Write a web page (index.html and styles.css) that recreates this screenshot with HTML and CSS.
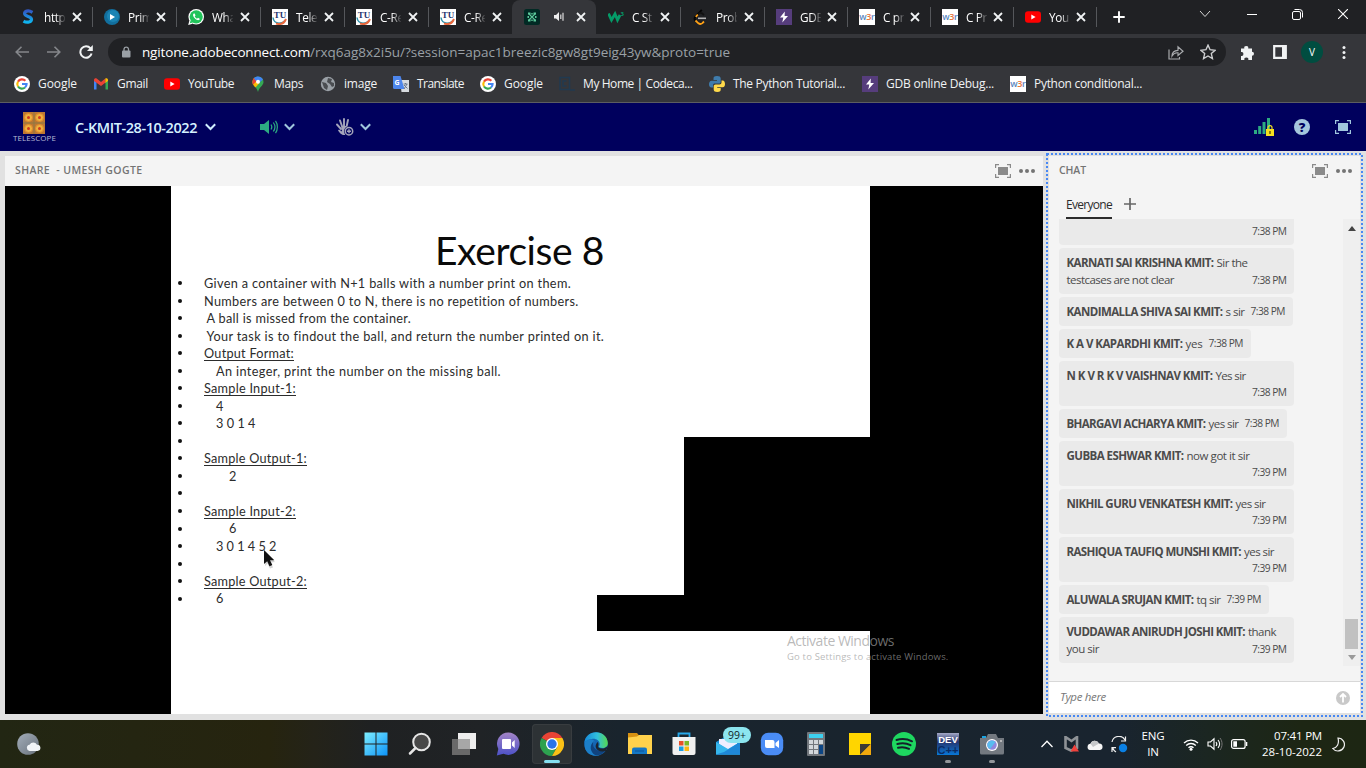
FILE: index.html
```html
<!DOCTYPE html>
<html lang="en">
<head>
<meta charset="utf-8">
<title>C-KMIT-28-10-2022</title>
<link rel="stylesheet" href="styles.css">
</head>
<body>
<svg class="defs" width="0" height="0">
  <symbol id="x" viewBox="0 0 10 10"><path d="M1 1l8 8M9 1l-8 8" fill="none" stroke="#f1f3f4" stroke-width="1.8"/></symbol>
  <symbol id="tu" viewBox="0 0 16 16"><path d="M0 0h16v16H0z" fill="#fff"/><path d="M1 8.500c.5 4 3 5.500 6 5.700c3 0 5-1 6-2.700" fill="none" stroke="#2a8fa8" stroke-width="1.500"/><path d="M4 14.500c4 1.300 8 0 10-4.500" fill="none" stroke="#e8673c" stroke-width="2"/><text x="8" y="8.500" text-anchor="middle" font-family="Liberation Serif" font-weight="700" font-size="9" fill="#27356f">TU</text></symbol>
  <symbol id="w3r" viewBox="0 0 16 16"><path d="M0 0h16v16H0z" fill="#fff"/><text x=".3" y="11" font-family="Open Sans" font-size="9" font-weight="600" letter-spacing="-.4" fill="#5b86c0">w<tspan fill="#e8743b">3</tspan>r</text></symbol>
  <symbol id="gdb" viewBox="0 0 16 16"><path d="M0 0h16v16H0z" fill="#563d7c"/><path d="M8.800 2.500L4 8.600h3.300L6.300 13.500 12 6.900H8.600z" fill="#fff"/></symbol>
  <symbol id="yt" viewBox="0 0 16 16"><rect y="2.300" width="16" height="11.500" rx="3" fill="#f00"/><path d="M6.300 5.500v5L10.600 8z" fill="#fff"/></symbol>
  <symbol id="google" viewBox="0 0 16 16"><circle cx="8" cy="8" r="8" fill="#fff"/><g fill="none" stroke-width="2.100"><path d="M11.400 4.800A4.700 4.700 0 0 0 4 5.600" stroke="#ea4335"/><path d="M4 5.600a4.700 4.700 0 0 0 0 4.900" stroke="#fbbc05"/><path d="M4 10.500a4.700 4.700 0 0 0 7 1" stroke="#34a853"/><path d="M11 11.500c1.200-1 1.600-2.100 1.600-3.500H8" stroke="#4285f4"/></g></symbol>
  <symbol id="chev" viewBox="0 0 11 8"><path d="M.8 1.300l4.700 4.700 4.700-4.700" fill="none" stroke="currentColor" stroke-width="2"/></symbol>
  <symbol id="full" viewBox="0 0 16 14"><path d="M4 .6H.6V4M12 .6h3.400V4M4 13.400H.6V10M12 13.400h3.400V10" fill="none" stroke="currentColor" stroke-width="1.200"/><path d="M3 3h10v8H3z" fill="currentColor"/></symbol>
  <symbol id="dots" viewBox="0 0 16 4"><g fill="currentColor"><circle cx="2" cy="2" r="2"/><circle cx="8" cy="2" r="2"/><circle cx="14" cy="2" r="2"/></g></symbol>
</svg>

<header class="tabs">
  <div class="tab"><svg class="fav" viewBox="0 0 16 16"><defs><linearGradient id="sg" x2="0" y2="1"><stop stop-color="#3159c5"/><stop offset="1" stop-color="#0fb4ef"/></linearGradient></defs><path d="M12.500 3.300C8 .8 4.600 2.200 4.600 4.600c0 3.400 6.900 2.300 6.900 5.600 0 2.800-4.300 4-8 1.900" fill="none" stroke="url(#sg)" stroke-width="3.200"/></svg><span class="title">http</span><svg class="close"><use href="#x"/></svg></div>
  <div class="tab"><svg class="fav" viewBox="0 0 16 16"><circle cx="8" cy="8" r="8" fill="#126f9e"/><circle cx="9" cy="7" r="6" fill="#1b84b4"/><path d="M6 5v6l5-3z" fill="#fff"/></svg><span class="title">Prim</span><svg class="close"><use href="#x"/></svg></div>
  <div class="tab"><svg class="fav" viewBox="0 0 16 16"><circle cx="8.200" cy="7.800" r="7.800" fill="#fff"/><path d="M.2 16l1.200-4.500 3.300 3.300z" fill="#fff"/><circle cx="8.200" cy="7.800" r="6.600" fill="#21c45a"/><path d="M1.800 14.300l1-3.300 2.200 2.500z" fill="#21c45a"/><path d="M5.700 4.500c-1.300 1-.7 3.500 1.500 5.300 2.200 1.900 4 1.800 4.800.3l-2-1.300-1 1c-1-.4-1.800-1.200-2.300-2.200l.8-1-.8-2z" fill="#fff"/></svg><span class="title">Wha</span><svg class="close"><use href="#x"/></svg></div>
  <div class="tab"><svg class="fav"><use href="#tu"/></svg><span class="title">Tele</span><svg class="close"><use href="#x"/></svg></div>
  <div class="tab"><svg class="fav"><use href="#tu"/></svg><span class="title">C-R<i>e</i></span><svg class="close"><use href="#x"/></svg></div>
  <div class="tab last"><svg class="fav"><use href="#tu"/></svg><span class="title">C-R<i>e</i></span><svg class="close"><use href="#x"/></svg></div>
  <div class="tab active"><svg class="fav" viewBox="0 0 16 16"><rect width="16" height="16" rx="2.500" fill="#012a24"/><path d="M4.500 4.500l7 7M11.500 4.500l-7 7" fill="none" stroke="#5cc99b" stroke-width="1.100"/><g fill="#5cc99b"><path d="M4 3.500h2.500v2H4zM9.500 3.500H12v2H9.500zM4 10.500h2.500v2H4zM9.500 10.500H12v2H9.500zM3.500 7h1.500v2H3.500zM11 7h1.500v2H11zM7.300 4h1.400v1.500H7.300zM7.300 10.500h1.400V12H7.300z"/></g></svg><svg class="sound" viewBox="0 0 11 10"><path d="M0 3h2l3-3v9L2 6.500H0z" fill="#eee"/><path d="M6.800 2.500v4.500M9 .8v8" stroke="#ddd" stroke-width="1.200"/></svg><svg class="close"><use href="#x"/></svg></div>
  <div class="tab"><svg class="fav" viewBox="0 0 16 16"><path d="M.5 4.500l3 6.500L7 5l2.500 6 2.500-5" fill="none" stroke="#049b68" stroke-width="2.800"/><text x="12.500" y="6.500" font-family="Open Sans" font-size="6" font-weight="700" fill="#049b68">3</text></svg><span class="title">C St</span><svg class="close"><use href="#x"/></svg></div>
  <div class="tab"><svg class="fav" viewBox="0 0 16 16"><path d="M9.800.8L3.500 7.500C2.300 9 2.300 10.500 3.500 11.800" fill="none" stroke="#050505" stroke-width="1.900"/><path d="M12 6L10 4.300C8.800 3.500 7.500 3.700 6.500 4.800" fill="none" stroke="#111" stroke-width="1.700"/><path d="M3.500 11.500L6.400 14.300c1.300.9 2.700.9 4-.2l1.600-1.600M5.800 5.500L3.800 7.800" fill="none" stroke="#ffa116" stroke-width="1.800"/><path d="M6 9.300h8" stroke="#b3b3b3" stroke-width="1.600"/></svg><span class="title">Prob</span><svg class="close"><use href="#x"/></svg></div>
  <div class="tab n"><svg class="fav"><use href="#gdb"/></svg><span class="title">GD<i>B</i></span><svg class="close"><use href="#x"/></svg></div>
  <div class="tab n"><svg class="fav"><use href="#w3r"/></svg><span class="title">C pr</span><svg class="close"><use href="#x"/></svg></div>
  <div class="tab n"><svg class="fav"><use href="#w3r"/></svg><span class="title">C Pr</span><svg class="close"><use href="#x"/></svg></div>
  <div class="tab n"><svg class="fav"><use href="#yt"/></svg><span class="title">You</span><svg class="close"><use href="#x"/></svg></div>
  <svg class="plus" viewBox="0 0 12 12"><path d="M6 .3v11.400M.3 6h11.400" stroke="#fff" stroke-width="1.900"/></svg>
  <div class="winctl">
    <svg width="12" height="8" viewBox="0 0 12 8"><path d="M1 1l5 5.500L11 1" fill="none" stroke="#d5d5d5"/></svg>
    <svg width="10" height="8" viewBox="0 0 10 8"><path d="M0 4.500h10" stroke="#fff"/></svg>
    <svg width="11" height="11" viewBox="0 0 11 11"><rect x=".5" y="2.500" width="8" height="8" rx="1.500" fill="none" stroke="#fff"/><path d="M2.500.5h5a3 3 0 0 1 3 3v5" fill="none" stroke="#fff"/></svg>
    <svg width="10" height="10" viewBox="0 0 10 10"><path d="M0 0l10 10M10 0L0 10" stroke="#fff" stroke-width="1.100"/></svg>
  </div>
</header>

<div class="toolbar">
  <svg class="nav" viewBox="0 0 14 12"><path d="M14 6H1M6.500.7L1.200 6l5.300 5.300" fill="none" stroke="#85878b" stroke-width="1.600"/></svg>
  <svg class="nav" viewBox="0 0 14 12"><path d="M0 6h13M7.500.7L12.800 6l-5.300 5.300" fill="none" stroke="#85878b" stroke-width="1.600"/></svg>
  <svg class="reload" viewBox="0 0 14 14"><path d="M11.500 3.400A5.700 5.700 0 1 0 12.600 8.500" fill="none" stroke="#f1f3f4" stroke-width="2"/><path d="M13.800 0v6H8z" fill="#f1f3f4"/></svg>
  <div class="omni">
    <svg class="lock" viewBox="0 0 10 13"><rect x="1" y="4.500" width="8.500" height="7" rx="1" fill="#9aa0a6"/><path d="M3 5V3a2.300 2.300 0 0 1 4.500 0v2" fill="none" stroke="#9aa0a6" stroke-width="1.300"/></svg>
    <span class="host" data-fit="168">ngitone.adobeconnect.com</span><span class="path" data-fit="420">/rxq6ag8x2i5u/?session=apac1breezic8gw8gt9eig43yw&amp;proto=true</span>
    <svg class="share" viewBox="0 0 16 15"><path d="M1 4.500v9.500h10.500v-2M4 11c0-4 2-5.500 6-5.700V1.800L15 6.300l-5 4.200V7.800C7.500 7.500 5.500 8.500 4 11z" fill="none" stroke="#a9abae" stroke-width="1.200"/></svg>
    <svg class="star" viewBox="0 0 14 14"><path d="M7 1l1.800 4 4.400.5-3.300 2.900 1 4.300L7 10.500l-3.900 2.200 1-4.300L.8 5.500 5.200 5z" fill="none" stroke="#cfd0d2" stroke-width="1.200"/></svg>
  </div>
  <svg class="puz" viewBox="0 0 15 15"><path d="M1 3.500h3.300a2 2 0 1 1 3.900 0H12v3.300a2 2 0 1 1 0 4V15H8.300a2 2 0 1 0-3.900 0H1v-4a2 2 0 1 0 0-3.900z" fill="#f1f3f4"/></svg>
  <svg class="side" viewBox="0 0 14 14"><path d="M1.200 1.200h11.600v11.600H1.200z" fill="none" stroke="#f1f3f4" stroke-width="2.200"/><path d="M9 1h4v12H9z" fill="#f1f3f4"/></svg>
  <span class="avatar">V</span>
  <svg class="kebab" viewBox="0 0 4 13"><g fill="#f1f3f4"><circle cx="2" cy="1.600" r="1.500"/><circle cx="2" cy="6.500" r="1.500"/><circle cx="2" cy="11.400" r="1.500"/></g></svg>
</div>

<nav class="marks">
  <div class="bm b1"><svg class="fav"><use href="#google"/></svg><span data-fit="39">Google</span></div>
  <div class="bm b2"><svg class="fav" viewBox="0 0 16 16"><path d="M1 13.500V4.500l2.500 1.800v7.200z" fill="#4285f4"/><path d="M15 13.500V4.500l-2.500 1.800v7.200z" fill="#34a853"/><path d="M1 3.800c0-1.600 1.800-2 2.700-1.300L8 6l4.300-3.500v4.300L8 10 3.500 6.800 1 5z" fill="#ea4335"/><path d="M12.300 2.500c1-.8 2.700-.2 2.700 1.300V5l-2.700 2z" fill="#fbbc04"/></svg><span data-fit="31">Gmail</span></div>
  <div class="bm b3"><svg class="fav"><use href="#yt"/></svg><span data-fit="46">YouTube</span></div>
  <div class="bm b4"><svg class="fav" viewBox="0 0 16 16"><path d="M2.500 6a5.500 5.500 0 0 1 11 0c0 3.500-4.300 5-5.500 10C6.800 11.500 2.500 9.500 2.500 6z" fill="#34a853"/><path d="M2.500 6A5.500 5.500 0 0 1 4 2.300L9.500 7 5.500 11.500C3.800 9.800 2.500 8.200 2.500 6z" fill="#fbbc04"/><path d="M4 2l3 2.700-4.100 4C2.200 6.300 2.500 3.500 4 2z" fill="#ea4335"/><path d="M4 2c3-2.700 7.200-1.700 9 1.500L9 7 5 4z" fill="#4285f4"/><circle cx="8" cy="5.800" r="2" fill="#fff"/></svg><span data-fit="29">Maps</span></div>
  <div class="bm b5"><svg class="fav" viewBox="0 0 16 16"><circle cx="8" cy="8" r="7.200" fill="#9aa0a6"/><path d="M2 6l4 1 2 3-1 4-3-2zM8 2l4 1-1 3 3 1v3l-2 1-2-3-3-2z" fill="#4a4d51"/></svg><span data-fit="33">image</span></div>
  <div class="bm b6"><svg class="fav" viewBox="0 0 16 16"><path d="M7 4h9v12H8.500z" fill="#d7dbe0"/><path d="M0 0h7.500l4 13H1.500Q0 13 0 11.500z" fill="#4d86ec"/><text x="1.500" y="8.500" font-family="Open Sans" font-size="7" font-weight="700" fill="#fff">G</text><path d="M10.500 8h4M12.500 7v1M11 13l3-5M11 9l3.500 3.500" stroke="#68778c" fill="none"/></svg><span data-fit="47">Translate</span></div>
  <div class="bm b7"><svg class="fav"><use href="#google"/></svg><span data-fit="39">Google</span></div>
  <div class="bm b8"><svg class="fav" viewBox="0 0 16 16"><path d="M10.500 13.500H1v-12h9.500z" fill="none" stroke="#213a50" stroke-width="1.500"/><path d="M7.500 5H4v5h3.500M11 14h5" fill="none" stroke="#213a50" stroke-width="1.500"/></svg><span data-fit="109.500">My Home | Codeca...</span></div>
  <div class="bm b9"><svg class="fav" viewBox="0 0 16 16"><path d="M8 0C5 0 4.500 1 4.500 2.500V4H8v.7H2.500C.8 4.700 0 6.500 0 8.300S.8 11.500 2.500 11.500H4V9.500c0-1.400.8-2 2-2h4c1 0 1.700-.8 1.700-1.800V2.500C11.700.8 10.500 0 8 0z" fill="#3f7cac"/><path d="M8.200 16c3 0 3.500-1 3.500-2.500V12H8.200v-.7h5.500c1.700 0 2.300-1.500 2.300-3.300s-.8-3.500-2.300-3.500h-1.200v2c0 1.300-1 2-2 2h-4c-1 0-1.800.8-1.800 1.800v3.200C4.700 15.200 6 16 8.200 16z" fill="#ffda4b"/></svg><span data-fit="112">The Python Tutorial...</span></div>
  <div class="bm b10"><svg class="fav"><use href="#gdb"/></svg><span data-fit="108">GDB online Debug...</span></div>
  <div class="bm b11"><svg class="fav"><use href="#w3r"/></svg><span data-fit="108">Python conditional...</span></div>
</nav>

<div class="apphead">
  <div class="brand"><svg width="22" height="22" viewBox="0 0 22 22"><path d="M0 0h22v22H0z" fill="#bd7832"/><g fill="#efb23d" stroke="#e08a30" stroke-width="1"><circle cx="5.500" cy="5.500" r="4"/><circle cx="16.500" cy="5.500" r="4"/><circle cx="5.500" cy="16.500" r="4"/><circle cx="16.500" cy="16.500" r="4"/></g><g fill="#d0391e"><circle cx="5.500" cy="5.500" r="1.500"/><circle cx="16.500" cy="5.500" r="1.500"/><circle cx="5.500" cy="16.500" r="1.500"/><circle cx="16.500" cy="16.500" r="1.500"/></g><path d="M11 0v22M0 11h22" stroke="#8d7844"/></svg><span data-fit="43">TELESCOPE</span></div>
  <span class="room" data-fit="122">C-KMIT-28-10-2022</span>
  <svg class="chev c1"><use href="#chev"/></svg>
  <svg class="spk" viewBox="0 0 18 14"><path d="M0 4h4l5-4v14l-5-4H0z" fill="#2dab82"/><path d="M11 4.500c1 1.500 1 3.500 0 5M13.300 2.500c2 2.700 2 6.300 0 9M15.500.8c2.500 3.500 2.500 8.900 0 12.400" fill="none" stroke="#2dab82" stroke-width="1.200"/></svg>
  <svg class="chev c2"><use href="#chev"/></svg>
  <svg class="hand" viewBox="0 0 18 18"><g fill="none" stroke="#a4a5bb" stroke-linecap="round" stroke-width="1.900"><path d="M1 6.500l4 4.500M4 2.500l2.500 7M8 1v8M12 2l-1.500 7"/></g><path d="M5.500 8H12l-1 3.500L9 17H8c-3 0-4.500-2.500-6-4.500l1-1 3 2z" fill="#a4a5bb"/><circle cx="13" cy="13.200" r="5" fill="#00005d"/><circle cx="13" cy="13.200" r="3.700" fill="none" stroke="#a4a5bb" stroke-width="1.500"/><path d="M13 11.200v4M11 13.200h4" stroke="#a4a5bb" stroke-width="1.400"/></svg>
  <svg class="chev c3"><use href="#chev"/></svg>
  <svg class="bars" viewBox="0 0 20 19"><path d="M0 12h3v4H0zM4.200 8h3v8h-3zM8.500 4h3v12h-3zM13 0h3v16h-3z" fill="#2dab82"/><path d="M14 11V9.600a2 2 0 0 1 4 0V11" fill="none" stroke="#f2df20" stroke-width="1.200"/><path d="M12 11h8v7h-8z" fill="#f7e11d"/><path d="M16 13v3" stroke="#574e10" stroke-width="1.400"/></svg>
  <span class="help">?</span>
  <svg class="fs"><use href="#full"/></svg>
</div>

<main class="stage">
  <section class="pod share-pod">
    <div class="podhead"><span data-fit="127.5">SHARE &nbsp;- UMESH GOGTE</span><svg class="pfull"><use href="#full"/></svg><svg class="pdots"><use href="#dots"/></svg></div>
    <div class="screen">
      <div class="slide">
        <h1><span data-fit="169">Exercise 8</span></h1>
        <ul>
          <li><span data-fit="367">Given a container with N+1 balls with a number print on them.</span></li>
          <li><span data-fit="375">Numbers are between 0 to N, there is no repetition of numbers.</span></li>
          <li class="i1"><span data-fit="204.500">A ball is missed from the container.</span></li>
          <li class="i1"><span data-fit="397.500">Your task is to findout the ball, and return the number printed on it.</span></li>
          <li><u data-fit="90">Output Format:</u></li>
          <li class="i2"><span data-fit="285">An integer, print the number on the missing ball.</span></li>
          <li><u data-fit="92">Sample Input-1:</u></li>
          <li class="i2">4</li>
          <li class="i2"><span data-fit="39.500">3 0 1 4</span></li>
          <li></li>
          <li><u data-fit="103">Sample Output-1:</u></li>
          <li class="i3">2</li>
          <li></li>
          <li><u data-fit="92">Sample Input-2:</u></li>
          <li class="i3">6</li>
          <li class="i2"><span data-fit="60.500">3 0 1 4 5 2</span></li>
          <li></li>
          <li><u data-fit="103">Sample Output-2:</u></li>
          <li class="i2">6</li>
        </ul>
        <div class="block upper"></div>
        <div class="block lower"></div>
        <svg class="cursor" viewBox="0 0 14 20"><path d="M3 4l9 9-4 .5 2 5-3 1-2.500-5L2 17z" fill="#aaa" opacity=".5"/><path d="M1 1v14l3.200-2.800 2.300 5 2.800-1.200-2.300-4.800h4.300z" fill="#111"/></svg>
      </div>
      <div class="watermark"><span class="w1" data-fit="107">Activate Windows</span><span class="w2" data-fit="161.500">Go to Settings to activate Windows.</span></div>
    </div>
  </section>

  <section class="chat">
    <svg class="dotted" width="317" height="564"><rect x="1" y="1" width="315" height="562" fill="none" stroke="#4788f4" stroke-width="2" stroke-dasharray="2 2"/></svg>
    <div class="podhead"><span data-fit="27">CHAT</span><svg class="pfull"><use href="#full"/></svg><svg class="pdots"><use href="#dots"/></svg></div>
    <div class="chattabs"><span class="ev"><span data-fit="46">Everyone</span></span><svg width="12" height="12" viewBox="0 0 12 12"><path d="M6 0v12M0 6h12" stroke="#666" stroke-width="1.700"/></svg></div>
    <div class="log">
      <div class="msgs">
        <div class="msg cut"><time data-fit="34.500">7:38 PM</time></div>
        <div class="msg two t46"><p><b data-fit="147">KARNATI SAI KRISHNA KMIT:</b><span class="s" data-fit="31">Sir the</span><br><span data-fit="107.500">testcases are not clear</span></p><time data-fit="34.500">7:38 PM</time></div>
        <div class="msg one"><b data-fit="156">KANDIMALLA SHIVA SAI KMIT:</b><span class="s" data-fit="19">s sir</span><time data-fit="34.500">7:38 PM</time></div>
        <div class="msg one"><b data-fit="116">K A V KAPARDHI KMIT:</b><span class="s" data-fit="17">yes</span><time data-fit="34.500">7:38 PM</time></div>
        <div class="msg two"><p><b data-fit="146">N K V R K V VAISHNAV KMIT:</b><span class="s" data-fit="30">Yes sir</span></p><time data-fit="34.500">7:38 PM</time></div>
        <div class="msg one"><b data-fit="139">BHARGAVI ACHARYA KMIT:</b><span class="s" data-fit="30">yes sir</span><time data-fit="34.500">7:38 PM</time></div>
        <div class="msg two"><p><b data-fit="117">GUBBA ESHWAR KMIT:</b><span class="s" data-fit="63">now got it sir</span></p><time data-fit="34.500">7:39 PM</time></div>
        <div class="msg two"><p><b data-fit="166">NIKHIL GURU VENKATESH KMIT:</b><span class="s" data-fit="30">yes sir</span></p><time data-fit="34.500">7:39 PM</time></div>
        <div class="msg two"><p><b data-fit="174.5">RASHIQUA TAUFIQ MUNSHI KMIT:</b><span class="s" data-fit="30">yes sir</span></p><time data-fit="34.500">7:39 PM</time></div>
        <div class="msg one"><b data-fit="127">ALUWALA SRUJAN KMIT:</b><span class="s" data-fit="24">tq sir</span><time data-fit="34.500">7:39 PM</time></div>
        <div class="msg two t46"><p><b data-fit="178.5">VUDDAWAR ANIRUDH JOSHI KMIT:</b><span class="s" data-fit="28">thank</span><br><span data-fit="32.500">you sir</span></p><time data-fit="34.500">7:39 PM</time></div>
      </div>
      <div class="scroll"><i class="up"></i><i class="thumb"></i><i class="down"></i></div>
    </div>
    <div class="type"><em data-fit="46">Type here</em><svg width="14" height="14" viewBox="0 0 14 14"><circle cx="7" cy="7" r="7" fill="#c9c9c9"/><path d="M7 11.500V3.500M4 6l3-3 3 3" fill="none" stroke="#fff" stroke-width="1.800"/></svg></div>
  </section>
</main>

<footer class="task">
  <svg class="wx" viewBox="0 0 24 23"><defs><linearGradient id="mg" x2="1" y2="1"><stop stop-color="#a3adb9"/><stop offset="1" stop-color="#69727c"/></linearGradient></defs><circle cx="11" cy="11" r="10.800" fill="url(#mg)"/><path d="M12.500 18a3.200 3.200 0 0 1 0-6.300 4.300 4.300 0 0 1 7.500 0 3 3 0 0 1 .5 6.300z" fill="#f1f4f7"/></svg>
  <div class="apps">
    <div class="app"><svg width="24" height="24" viewBox="0 0 24 24"><defs><linearGradient id="wg" gradientUnits="userSpaceOnUse" x1="0" y1="0" x2="24" y2="24"><stop stop-color="#80f0ff"/><stop offset="1" stop-color="#0a91f8"/></linearGradient></defs><path d="M.5.500h11v11H.5zM12.500.500h11v11h-11zM.5 12.500h11v11H.5zM12.500 12.500h11v11h-11z" fill="url(#wg)"/></svg></div>
    <div class="app"><svg width="24" height="24" viewBox="0 0 24 24"><circle cx="13.500" cy="10" r="8.300" fill="#484848" stroke="#e6e6e6" stroke-width="2"/><path d="M7.500 16l-5.500 5.500" stroke="#e6e6e6" stroke-width="2.500" stroke-linecap="round"/></svg></div>
    <div class="app"><svg width="24" height="24" viewBox="0 0 24 24"><path d="M6 1h18v16H6z" fill="#eee"/><path d="M0 7h18v16H0z" fill="#696969"/><path d="M6 7h12v10H6z" fill="#a7a7a7"/></svg></div>
    <div class="app"><svg width="24" height="24" viewBox="0 0 24 24"><defs><linearGradient id="tg" x2="0" y2="1"><stop stop-color="#a384c6"/><stop offset="1" stop-color="#4c51c8"/></linearGradient></defs><path d="M12.500.500a11.200 11.200 0 1 1-5 21.300L.8 23.500l1.500-6.500A11.200 11.200 0 0 1 12.500.500z" fill="url(#tg)"/><rect x="6" y="7" width="9" height="10" rx="1" fill="#fff"/><path d="M16 10.500l2.700-2.500v8L16 13.500z" fill="#fff"/></svg></div>
    <div class="app on"><svg width="24" height="24" viewBox="0 0 24 24"><path d="M12 12L1.600 6A12 12 0 0 1 22.400 6z" fill="#e84335"/><path d="M12 12L1.600 6A12 12 0 0 0 12 24l5-9z" fill="#2da14f"/><path d="M12 6h10.400A12 12 0 0 1 12 24l5.200-9z" fill="#fbc116"/><circle cx="12" cy="12" r="6" fill="#fff"/><circle cx="12" cy="12" r="4.700" fill="#2a74e8"/></svg></div>
    <div class="app"><svg width="24" height="24" viewBox="0 0 24 24"><defs><linearGradient id="eg"><stop stop-color="#1688d8"/><stop offset=".55" stop-color="#31bfdc"/><stop offset="1" stop-color="#56d94e"/></linearGradient></defs><circle cx="12" cy="12" r="11.800" fill="#1566b3"/><path d="M.4 11C1.500-3.500 23-3 23.800 11c0 5-5 6-9 4 3-5-2-9-7-8C4 7.500 1.500 9 .4 11z" fill="url(#eg)"/><path d="M1 10c4-4 9-3 9.500 0C6 14 9 20 16 23 6 26-1 19 1 10z" fill="#1c7fc9"/><path d="M10 9c-3 5 1 11 11 10-3 4-8 5-10 4-5-3-6-10-1-14z" fill="#10437f"/><path d="M13.500 10c2 2 0 4 1 5.500 3 2 7 1 9.300-1.500L22 19c-9 2-13-4-8.500-9z" fill="#1b2530"/></svg></div>
    <div class="app"><svg width="24" height="22" viewBox="0 0 24 22"><path d="M0 0h9l2 2.500H24V7H0z" fill="#d69112"/><path d="M0 4.500L9 3.500l2-1.500h13v19H0z" fill="#ffd24c"/><path d="M4 21v-4.500Q4 14.500 6 14.500h11q2 0 2 2V21z" fill="#1477c4"/><path d="M7 18h9" stroke="#0c5498"/></svg></div>
    <div class="app"><svg width="24" height="24" viewBox="0 0 24 24"><path d="M6.500 6V1.500h11V6" fill="none" stroke="#26a8ea" stroke-width="1.800"/><path d="M.5 5h23v16q0 2-2 2h-19q-2 0-2-2z" fill="#f0f0f0"/><path d="M7 9h4.500v4.500H7z" fill="#e8502a"/><path d="M12.500 9H17v4.500h-4.500z" fill="#7cb928"/><path d="M7 14.500h4.500V19H7z" fill="#1a9fe5"/><path d="M12.500 14.500H17V19h-4.500z" fill="#fcb714"/></svg></div>
    <div class="app"><svg width="24" height="24" viewBox="0 0 24 24"><path d="M0 10L12 3l12 7v12.500H0z" fill="#148ad3"/><path d="M3 7h18v5l-9 6-9-6z" fill="#eef"/><path d="M0 10l12 7 12-7v12.500H0z" fill="#36b6ed"/><path d="M24 10L8 20l-8 2.500h24z" fill="#1f88d8"/></svg><span class="badge">99+</span></div>
    <div class="app"><svg width="24" height="24" viewBox="0 0 24 24"><rect x=".8" y=".8" width="22.400" height="22.400" rx="7.500" fill="#4a8cf5"/><path d="M5 8h7.500q2 0 2 2v6H7q-2 0-2-2zM15.500 11L19 8v8l-3.500-2.500z" fill="#fff"/></svg></div>
    <div class="app"><svg width="18" height="24" viewBox="0 0 18 24"><rect width="18" height="24" rx="1" fill="#72777d"/><path d="M2 2h14v4H2z" fill="#3dd0ef"/><path d="M2 8h4v4H2zM7 8h4v4H7zM12 8h4v4h-4zM2 13h4v4H2zM7 13h4v4H7zM2 18h4v4H2zM7 18h4v4H7z" fill="#d2d7db"/><path d="M12 13h4v9h-4z" fill="#0d4685"/></svg></div>
    <div class="app"><svg width="22" height="22" viewBox="0 0 22 22"><path d="M0 0h22v22H0z" fill="#ffd500"/><path d="M11 22V11h11z" fill="#3c3934"/><path d="M11 22L22 11v11z" fill="#f1a90d"/></svg></div>
    <div class="app"><svg width="24" height="24" viewBox="0 0 24 24"><circle cx="12" cy="12" r="12" fill="#1ed760"/><path d="M4.500 8c5-1.500 11-1 15.500 1.300M5.300 12c4.500-1.300 9.500-.8 13.200 1.200M6 15.700c4-1 7.500-.6 11 1.200" fill="none" stroke="#14202a" stroke-width="2" stroke-linecap="round"/></svg></div>
    <div class="app run"><svg width="22" height="22" viewBox="0 0 22 22"><defs><linearGradient id="dg" x2="0" y2="1"><stop stop-color="#a4a9c6"/><stop offset=".4" stop-color="#25356f"/><stop offset="1" stop-color="#0878d8"/></linearGradient></defs><path d="M0 0h22v22H0z" fill="url(#dg)"/><text x="11" y="10" text-anchor="middle" font-family="Liberation Sans" font-size="9.500" font-weight="700" fill="#fff">DEV</text><text x="11" y="20.500" text-anchor="middle" font-family="Liberation Sans" font-size="11" font-weight="700" fill="#092b65">C++</text></svg></div>
    <div class="app run"><svg width="24" height="22" viewBox="0 0 24 22"><path d="M2 3h4v3H2z" fill="#1aa5e3"/><path d="M0 5h6l2-4h8l2 4h6v15q0 1.500-1.500 1.500h-21Q0 21.500 0 20z" fill="#737980"/><circle cx="12" cy="12" r="6" fill="#fff"/><circle cx="12" cy="12" r="4.800" fill="#9187dd"/><path d="M7.500 10.500a4.800 4.800 0 0 1 8-1.500L10 16a4.800 4.800 0 0 1-2.500-5.500z" fill="#59bcef"/><circle cx="21" cy="8" r="1" fill="#ccc"/></svg></div>
  </div>
  <div class="tray">
    <svg class="t1" width="12" height="8" viewBox="0 0 12 8"><path d="M.5 7L6 1.300 11.500 7" fill="none" stroke="#fff" stroke-width="1.300"/></svg>
    <svg class="t2" width="15" height="16" viewBox="0 0 15 16"><path d="M1.500 1l6 4 5.500-4v11L7 14.500 1.500 12z" fill="none" stroke="#8e9296" stroke-width="2.600"/><path d="M10.500 8.500l4.500 7H6.500z" fill="#f0413c"/></svg>
    <svg class="t3" width="16" height="11" viewBox="0 0 16 11"><path d="M3 11a3.200 3.200 0 0 1 .5-6.300A4.600 4.600 0 0 1 12 4.500 3.300 3.300 0 0 1 13 11z" fill="#f6f6f6"/><path d="M3.500 4.700A4.600 4.600 0 0 1 12 4.500L6 8z" fill="#c6c8ca"/></svg>
    <svg class="t4" width="17" height="17" viewBox="0 0 17 17"><path d="M1 6a7 7 0 0 1 13-2M14.500.5V5H10M5 16c-1.700-1-2.700-2.400-3.300-4M1 16v-4.300h4" fill="none" stroke="#f0f0f0" stroke-width="1.200"/><circle cx="12" cy="12" r="4.200" fill="#0a80e4"/></svg>
    <div class="lang"><span>ENG</span><span>IN</span></div>
    <svg class="t5" width="16" height="13" viewBox="0 0 16 13"><path d="M1 5a10 10 0 0 1 14 0M3.200 7.500a6.800 6.800 0 0 1 9.600 0M5.500 9.800a3.500 3.500 0 0 1 5 0" fill="none" stroke="#fff" stroke-width="1.300"/><circle cx="8" cy="11.200" r="1.500" fill="#fff"/></svg>
    <svg class="t6" width="16" height="14" viewBox="0 0 16 14"><path d="M1 5h2.500L7 1.800v10.400L3.500 9H1z" fill="none" stroke="#fff" stroke-width="1.100"/><path d="M9 5c1 1.200 1 2.800 0 4M11 3c2 2.500 2 5.500 0 8" fill="none" stroke="#fff" stroke-width="1.100"/><path d="M13 1c2.700 3.500 2.700 8.500 0 12" fill="none" stroke="#777"/></svg>
    <svg class="t7" width="17" height="10" viewBox="0 0 17 10"><rect x=".6" y=".6" width="13.500" height="8.800" rx="2" fill="none" stroke="#fff" stroke-width="1.200"/><path d="M2.300 2.300H6v5.400H2.300zM15 3h1.300v4H15z" fill="#fff"/></svg>
    <div class="clock"><span data-fit="48">07:41 PM</span><span data-fit="60">28-10-2022</span></div>
    <svg class="t8" width="13" height="15" viewBox="0 0 13 15"><path d="M6 1a6.500 6.500 0 1 1-5.200 10.500C5 11 7.500 7 6 1z" fill="none" stroke="#eee" stroke-width="1.200"/></svg>
  </div>
</footer>
<script src="fit.js"></script>
</body>
</html>
```
FILE: styles.css
```css
* { box-sizing: border-box; }
body { margin: 0; width: 1366px; height: 768px; overflow: hidden; display: flex; flex-direction: column; font-family: "Open Sans", "Noto Sans", sans-serif; font-size: 12px; background: #e1e1e1; }
svg { display: block; flex: none; }
.defs { position: absolute; }
[data-fit] { display: inline-block; white-space: nowrap; }
.fav { width: 16px; height: 16px; }

.tabs { height: 34px; background: #202124; display: flex; padding-left: 8px; color: #fff; flex: none; }
.tab { width: 84px; height: 34px; display: flex; align-items: center; padding: 0 0 0 12px; position: relative; flex: none; }
.tab.n { width: 83px; }
.tab::after { content: ""; width: 1px; height: 20px; background: #55575b; position: absolute; right: -1px; top: 7px; }
.tab.last::after, .tab.active::after { display: none; }
.tab.active { background: #35363a; border-radius: 8px 8px 0 0; }
.title { width: 21px; overflow: hidden; white-space: nowrap; margin-left: 8px; font-size: 11.800px; letter-spacing: -.35px; mask-image: linear-gradient(90deg, #000 55%, rgba(0,0,0,.1)); }
.title i { font-style: normal; }
.close { width: 10px; height: 10px; margin-left: 7px; }
.n .close { margin-left: 6px; }
.sound { width: 11px; height: 10px; margin: 0 6px 0 14px; }
.active .close { margin-left: 5px; }
.plus { width: 12px; height: 12px; margin: 11px 0 0 17px; }
.winctl { margin-left: auto; display: flex; align-items: center; height: 28px; gap: 35px; padding-right: 18px; }
.winctl svg:first-child { margin-right: 1px; }

.toolbar { height: 36px; background: #35363a; display: flex; align-items: center; flex: none; padding-left: 15px; }
.nav { width: 14px; height: 12px; margin-right: 18px; }
.reload { width: 14px; height: 14px; margin-right: 15px; }
.omni { width: 1118px; height: 28px; border-radius: 14px; background: #202124; display: flex; align-items: center; padding-left: 13px; font-size: 13.500px; }
.lock { width: 10px; height: 13px; margin-right: 11px; }
.host { color: #fff; }
.path { color: #9aa0a6; }
.share { width: 16px; height: 15px; margin-left: 438px; }
.star { width: 16px; height: 16px; margin-left: 16px; }
.puz { width: 15px; height: 15px; margin-left: 14px; }
.side { width: 14px; height: 14px; margin-left: 18px; }
.avatar { width: 22px; height: 22px; margin-left: 14px; border-radius: 50%; background: #004d40; color: #fff; font-size: 10px; display: flex; align-items: center; justify-content: center; }
.kebab { width: 4px; height: 13px; margin-left: 19px; }

.marks { height: 33px; flex: none; background: #35363a; border-bottom: 1px solid #5c5d61; display: flex; padding: 6px 0 0 14px; color: #f1f3f4; }
.bm { display: flex; align-items: center; gap: 8px; height: 16px; flex: none; }
.bm span { line-height: 16px; }
.b1 { width: 79px; } .b2 { width: 71px; } .b3 { width: 86px; } .b4 { width: 70px; } .b5 { width: 73px; } .b6 { width: 87px; } .b7 { width: 79px; } .b8 { width: 150px; } .b9 { width: 153px; } .b10 { width: 148px; }

.apphead { height: 48px; background: #00005d; flex: none; display: flex; align-items: center; color: #d5f1ff; }
.brand { width: 43px; margin-left: 13px; display: flex; flex-direction: column; align-items: center; font-size: 8px; line-height: 8px; color: #b9bbd6; padding-bottom: 1px; }
.brand svg { margin-right: 2px; }
.room { margin-left: 19px; font-size: 14.500px; font-weight: 600; }
.chev { width: 11px; height: 8px; color: #a0c6dd; }
.c1 { margin-left: 8px; color: #cfeeff; }
.spk { width: 18px; height: 14px; margin-left: 44px; }
.c2 { margin-left: 6px; }
.hand { width: 18px; height: 18px; margin-left: 41px; }
.c3 { margin-left: 6px; }
.bars { width: 20px; height: 19px; margin-left: 883px; }
.help { width: 16px; height: 16px; margin-left: 20px; border-radius: 50%; background: #a5c6dd; color: #00005d; font-weight: 800; font-size: 13px; line-height: 16px; text-align: center; }
.fs { width: 16px; height: 14px; margin-left: 25px; color: #a0c6dd; }

.stage { flex: none; height: 569px; display: flex; padding: 3px 3px 0 5px; gap: 3px; }
.share-pod { width: 1038px; padding-top: 2px; }
.podhead { height: 30px; background: #f4f4f4; display: flex; align-items: center; padding: 0 8px 0 10px; font-size: 10.500px; font-weight: 600; color: #747474; }
.podhead > span { margin-bottom: 2px; }
.pfull { width: 16px; height: 14px; margin-left: auto; color: #8a8a8a; }
.pdots { width: 16px; height: 4px; margin-left: 8px; }
.screen { height: 528px; background: #000; padding-left: 166px; position: relative; }
.slide { width: 699px; height: 528px; background: #fff; position: relative; font-family: Lato, sans-serif; color: #2c2c2c; }
.slide h1 { margin: 0; padding: 39px 0 0 264px; height: 89px; font-size: 39px; line-height: 50px; font-weight: 400; color: #0a0a0a; }
.slide ul { margin: 0; padding: 0; list-style: none; font-size: 12.700px; }
.slide li { height: 17.530px; line-height: 16.400px; padding-left: 33px; position: relative; }
.slide li::before { content: ""; width: 4px; height: 4px; border-radius: 50%; background: #111; position: absolute; left: 7px; top: 6.300px; }
.slide u { text-underline-offset: 1.500px; text-decoration-skip-ink: none; }
.slide .i1 { padding-left: 35.500px; }
.slide .i2 { padding-left: 45px; }
.slide .i3 { padding-left: 58px; }
.block { position: absolute; right: 0; background: #000; }
.upper { top: 251px; width: 186px; height: 158px; }
.lower { top: 409px; width: 273px; height: 36px; }
.cursor { position: absolute; left: 92px; top: 363px; width: 14px; height: 20px; }
.watermark { position: absolute; left: 782px; top: 446px; color: rgba(155,155,155,.7); display: flex; flex-direction: column; align-items: flex-start; }
.w1 { font-size: 14px; line-height: 17px; }
.w2 { font-size: 9.500px; line-height: 15px; }

.chat { width: 317px; height: 564px; padding: 2px 2px 3px 3px; position: relative; color: #4b4b4b; }
.dotted { position: absolute; left: 0; top: -1px; }
.chat .podhead { position: relative; width: 311px; }
.chattabs { background: #f4f4f4; height: 33px; display: flex; padding: 0 0 0 17px; width: 311px; position: relative; }
.ev { height: 33px; padding-top: 9.500px; border-bottom: 2px solid #2c2c2c; color: #2c2c2c; margin-right: 12px; }
.chattabs svg { margin-top: 12px; }
.log { width: 311px; height: 463px; background: #f4f4f4; display: flex; justify-content: space-between; position: relative; border-bottom: 1px solid #d8d8d8; }
.msgs { padding-left: 10px; display: flex; flex-direction: column; gap: 3px; align-items: flex-start; font-size: 11.500px; }
.msg { background: #eaeaea; border-radius: 4px; position: relative; padding: 6px 7.500px 0 7.500px; line-height: 17px; white-space: nowrap; }
.cut { width: 235px; height: 26px; border-radius: 0 0 4px 4px; }
.two { width: 235px; height: 45px; }
.t46 { height: 46px; }
.one { height: 29px; display: flex; }
.msg p { margin: 0; }
.s { margin-left: 3px; }
time { font-size: 10.200px; }
.one time { margin-left: 6px; }
.two time, .cut time { position: absolute; right: 7.500px; bottom: 5px; }
.scroll { width: 17px; height: 447px; background: #efefef; display: flex; flex-direction: column; align-items: center; }
.up { border: 4px solid transparent; border-bottom: 5px solid #444; border-top: 0; margin-top: 7px; }
.thumb { width: 13px; height: 30px; background: #c1c1c1; margin-top: 388px; }
.down { border: 4px solid transparent; border-top: 5px solid #999; border-bottom: 0; margin-top: 6px; }
.type { height: 31px; width: 311px; background: #fff; display: flex; align-items: center; justify-content: space-between; padding: 0 10px 0 11px; color: #777; font-size: 11.500px; position: relative; }
.type em { margin-bottom: 2px; }

.task { height: 48px; flex: none; display: flex; align-items: center; color: #fff; background: linear-gradient(90deg, #222613 0, #26240f 270px, #242319 315px, #1f2122 370px, #202326 480px, #19242d 620px, #19242f 1120px, #1b2621 1210px, #1d2614 1300px, #1d2613 1366px); }
.wx { width: 24px; height: 23px; margin-left: 17px; }
.apps { display: flex; gap: 4px; margin-left: 315px; }
.app { width: 40px; height: 40px; display: flex; align-items: center; justify-content: center; position: relative; border-radius: 4px; }
.on { background: #2d3235; box-shadow: inset 0 0 0 1px #383c3f; }
.on::after, .run::after { content: ""; position: absolute; bottom: 1px; height: 3px; border-radius: 2px; width: 16px; left: 12px; background: #85dff0; }
.run::after { width: 6px; left: 17px; background: #92969a; }
.badge { position: absolute; left: 15px; top: 3px; width: 28px; height: 16px; border-radius: 8px; background: #8ce5ef; color: #102027; font-size: 10.500px; line-height: 16px; text-align: center; }
.tray { display: flex; align-items: center; height: 48px; margin-left: 29px; }
.t2 { margin-left: 11px; } .t3 { margin-left: 8px; } .t4 { margin-left: 8px; }
.lang { width: 30px; margin-left: 10px; display: flex; flex-direction: column; align-items: center; font-size: 11.500px; line-height: 16px; letter-spacing: -.2px; }
.t5 { margin-left: 15px; } .t6 { margin-left: 8px; } .t7 { margin-left: 8px; }
.clock { display: flex; flex-direction: column; align-items: flex-end; margin-left: 13px; width: 61px; font-size: 11.500px; line-height: 16px; }
.t8 { margin-left: 10px; }
```
FILE: fit.js
```js
// Tracks each label so that it fills the width set in data-fit.
document.querySelectorAll('[data-fit]').forEach(function (el) {
  var want = parseFloat(el.dataset.fit);
  var have = el.getBoundingClientRect().width;
  el.style.letterSpacing = ((want - have) / el.textContent.length) + 'px';
});
```
